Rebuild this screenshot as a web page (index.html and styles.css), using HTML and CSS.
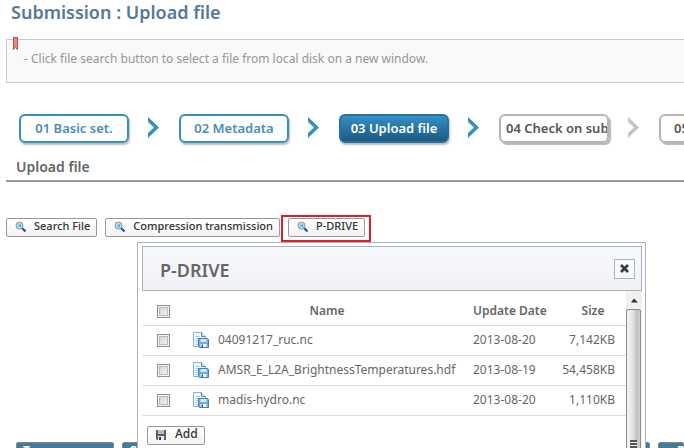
FILE: index.html
```html
<!DOCTYPE html>
<html lang="en">
<head>
<meta charset="utf-8">
<title>Submission : Upload file</title>
<link rel="stylesheet" href="styles.css">
</head>
<body>
<svg class="defs" aria-hidden="true">
  <defs>
    <symbol id="lens" viewBox="0 0 12 12">
      <path d="M7 7l3.500 3.500" stroke="#24588f" stroke-width="2.200"/>
      <circle cx="4.500" cy="4.500" r="3.500" fill="#a5def5" stroke="#8b939d"/>
      <path d="M3 5l3-2v3z" fill="#42a4dc"/>
    </symbol>
    <symbol id="file" viewBox="0 0 16 16">
      <path d="M.5.5h8l4 4v10H.5z" fill="#f2f8fd" stroke="#7fb2dc"/>
      <path d="M8.500.5v4h4" fill="#cfe3f5" stroke="#4d8fc4"/>
      <path d="M2.500 4.500h4M2.500 6.500h6M2.500 8.500h3M2.500 10.500h2M2.500 12.500h2" stroke="#a5cbe8"/>
      <path d="M5.500 6.500h9l1 1v8h-9l-1-1z" fill="#6fabe0" stroke="#3f7fbd"/>
      <path d="M7.500 7h6v3h-6z" fill="#d8ebfa"/>
      <path d="M7.500 12h6v3h-6z" fill="#fff"/>
      <path d="M8.500 12.500h1.500v2.500h-1.500z" fill="#27557f"/>
    </symbol>
    <symbol id="disk" viewBox="0 0 10 10">
      <path d="M0 0h10v10H1L0 9z" fill="#5b6166"/>
      <path d="M2 0h6v4H2z" fill="#b9bec2"/>
      <path d="M2 6h6v4H2z" fill="#e9ebec"/>
      <path d="M3 7h2v3H3z" fill="#33383c"/>
    </symbol>
    <symbol id="chevron" viewBox="0 0 11 21">
      <path d="M0 0l11 10.500L0 21v-5l6-5.500L0 5z" fill="currentColor"/>
    </symbol>
  </defs>
</svg>
<main class="page">
  <h1 class="title">Submission : Upload file</h1>
  <div class="notice">
    <svg class="ribbon" viewBox="0 0 5 13" aria-hidden="true"><path d="M.5.5h4v12l-2-2-2 2z" fill="#ea8a78" stroke="#b5544a"/></svg>
    <p>- Click file search button to select a file from local disk on a new window.</p>
  </div>
  <ol class="steps">
    <li><span class="step">01 Basic set.</span><svg class="arrow"><use href="#chevron"/></svg></li>
    <li><span class="step">02 Metadata</span><svg class="arrow"><use href="#chevron"/></svg></li>
    <li><span class="step current" aria-current="step">03 Upload file</span><svg class="arrow"><use href="#chevron"/></svg></li>
    <li class="pending"><span class="step long">04 Check on submission</span><svg class="arrow"><use href="#chevron"/></svg></li>
    <li class="pending"><span class="step last">05</span></li>
  </ol>
  <h2 class="section">Upload file</h2>
  <div class="tools">
    <button class="btn" type="button"><svg class="lens"><use href="#lens"/></svg>Search File</button>
    <button class="btn" type="button"><svg class="lens"><use href="#lens"/></svg>Compression transmission</button>
    <button class="btn marked" type="button"><svg class="lens"><use href="#lens"/></svg>P-DRIVE</button>
  </div>
  <div class="tabs"><span class="tab">T</span><span class="tab wide">C</span><span class="tab end">P</span></div>
</main>
<section class="dialog" role="dialog" aria-labelledby="dialog-title">
  <header class="dialog-head">
    <h2 id="dialog-title">P-DRIVE</h2>
    <button class="close" type="button" aria-label="Close"><svg viewBox="0 0 9 9"><path d="M1 1l7 7M8 1L1 8" stroke="#3b3d40" stroke-width="2.800"/></svg></button>
  </header>
  <div class="dialog-body">
    <div class="content">
      <table class="files">
        <thead>
          <tr><th class="pick"><input type="checkbox" aria-label="Select all"></th><th>Name</th><th class="date">Update Date</th><th class="size">Size</th></tr>
        </thead>
        <tbody>
          <tr><td class="pick"><input type="checkbox" aria-label="04091217_ruc.nc"></td><td><span class="name"><svg class="file"><use href="#file"/></svg>04091217_ruc.nc</span></td><td class="date">2013-08-20</td><td class="size">7,142KB</td></tr>
          <tr><td class="pick"><input type="checkbox" aria-label="AMSR_E_L2A_BrightnessTemperatures.hdf"></td><td><span class="name"><svg class="file"><use href="#file"/></svg>AMSR_E_L2A_BrightnessTemperatures.hdf</span></td><td class="date">2013-08-19</td><td class="size">54,458KB</td></tr>
          <tr><td class="pick"><input type="checkbox" aria-label="madis-hydro.nc"></td><td><span class="name"><svg class="file"><use href="#file"/></svg>madis-hydro.nc</span></td><td class="date">2013-08-20</td><td class="size">1,110KB</td></tr>
        </tbody>
      </table>
      <button class="btn add" type="button"><svg class="disk"><use href="#disk"/></svg>Add</button>
    </div>
    <div class="scrollbar" aria-hidden="true">
      <svg class="up" viewBox="0 0 16 17"><path d="M5 11l3-4 4 4z" fill="#333"/></svg>
      <div class="thumb"><span class="grip"></span></div>
    </div>
  </div>
</section>
</body>
</html>
```

FILE: styles.css
```css
* { box-sizing: border-box; }

body {
  margin: 0;
  height: 100vh;
  overflow: hidden;
  position: relative;
  background: #fff;
  color: #666;
  font-family: "Noto Sans", "Open Sans", sans-serif;
  font-size: 12px;
  line-height: 16px;
}

h1, h2, p, ol { margin: 0; padding: 0; }
svg { display: block; flex: none; }
button { font: inherit; }

.defs { position: absolute; width: 0; height: 0; }

.page { padding-left: 6px; }

.title {
  padding-left: 5px;
  color: #55799b;
  font-size: 18px;
  font-weight: 600;
  line-height: 24px;
}

.notice {
  position: relative;
  height: 44px;
  margin-top: 15px;
  padding: 11px 17px;
  border: 1px solid #ccc;
  border-right: 0;
  background: #f9f9f9;
  color: #969696;
}

.ribbon {
  position: absolute;
  top: -3px;
  left: 6px;
  width: 5px;
  height: 13px;
}

.steps {
  display: flex;
  height: 31px;
  margin: 31px 0 13px;
  padding-left: 13px;
  list-style: none;
}

.steps li {
  display: flex;
  flex: none;
  gap: 19px;
  width: 160px;
  color: #3390c0;
}

.step {
  width: 110px;
  height: 29px;
  overflow: hidden;
  border: 2px solid #3390c0;
  border-radius: 6px;
  box-shadow: 1px 2px 2px #bbb;
  font-size: 13px;
  font-weight: 600;
  line-height: 25px;
  text-align: center;
  white-space: nowrap;
  color: #4a8cb8;
}

.current {
  border-color: #28719d;
  background: linear-gradient(#3390c6, #1c5982);
  color: #fff;
}

.arrow {
  width: 11px;
  height: 21px;
  margin-top: 3px;
}

.steps .pending { color: #c4c4c4; }

.pending .step {
  border-color: #b5b5b5;
  box-shadow: 2px 2px 1px #b8b8b8;
  color: #555;
}

.long, .last { text-align: left; }
.long { padding-left: 5px; }
.last { padding-left: 13px; }

.section {
  padding: 0 10px 4px;
  border-bottom: 2px solid #999;
  font-size: 14px;
  font-weight: 600;
  line-height: 18px;
}

.tools {
  display: flex;
  gap: 8px;
  margin-top: 36px;
}

.btn {
  display: flex;
  align-items: center;
  height: 19px;
  padding: 0 6px 3px 8px;
  border: 1px solid #999;
  border-radius: 2px;
  background: linear-gradient(#fff, #f3f3f3);
  color: #333;
  font-size: 11px;
  font-weight: 500;
  line-height: 14px;
  white-space: nowrap;
}

.marked { position: relative; }

.marked::after {
  content: "";
  position: absolute;
  inset: -4px -7px -6px -8px;
  border: 2px solid #dc1f2b;
}

.lens {
  width: 12px;
  height: 12px;
  margin: 2px 7px 0 0;
}

.tabs {
  display: flex;
  gap: 8px;
  margin-top: 205px;
  padding-left: 10px;
}

.tab {
  width: 98px;
  height: 24px;
  padding: 0 6px;
  border: 1px solid #888;
  border-radius: 2px;
  background: #457b9a;
  color: #fff;
  font-weight: bold;
}

.wide { flex: 1; }

.end {
  width: 26px;
  padding-left: 18px;
}

.dialog {
  position: absolute;
  top: 242px;
  left: 137px;
  right: 38px;
  bottom: -60px;
  display: flex;
  flex-direction: column;
  padding: 3px;
  padding-left: 4px;
  border: 1px solid #a9b3be;
  background: #fff;
}

.dialog-head {
  display: flex;
  flex: none;
  justify-content: space-between;
  align-items: center;
  height: 45px;
  padding: 0 6px 0 17px;
  border: 1px solid #a9b3be;
  background: linear-gradient(#f8f9fd, #f0f2f7);
}

.dialog-head h2 {
  padding-top: 2px;
  font-size: 18px;
  font-weight: 600;
  line-height: 24px;
}

.close {
  display: grid;
  place-items: center;
  width: 21px;
  height: 20px;
  padding: 0;
  border: 1px solid #a9b3be;
  background: #f8f9fc;
}

.close svg {
  width: 9px;
  height: 9px;
}

.dialog-body {
  display: flex;
  flex: 1;
}

.content { flex: 1; }

.files {
  width: 100%;
  border-collapse: collapse;
  table-layout: fixed;
}

.files tr {
  height: 30px;
  border-bottom: 1px solid #ddd;
}

.files thead tr { height: 34px; }
.files th, .files td { padding: 0; }

.files th {
  padding-top: 7px;
  font-weight: 600;
}

.files .pick { width: 43px; }

.files .date {
  width: 91px;
  padding-left: 4px;
  text-align: left;
}

.files .size { width: 66px; }

.files td.size {
  padding-right: 11px;
  text-align: right;
}

.files input {
  appearance: none;
  display: block;
  width: 13px;
  height: 13px;
  margin: 0 0 0 15px;
  border: 1px solid #8e8f8f;
  background: linear-gradient(135deg, #cdd0d5, #f6f6f6);
  box-shadow: inset 0 0 0 1px #f4f4f4, inset 0 0 0 2px #b9bcc0;
}

.name {
  display: flex;
  align-items: center;
  gap: 9px;
  padding-left: 8px;
}

.file {
  width: 16px;
  height: 16px;
}

.add {
  margin: 10px 0 0 5px;
  font-size: 12px;
}

.disk {
  width: 10px;
  height: 10px;
  margin: 2px 9px 0 0;
}

.scrollbar {
  display: flex;
  flex-direction: column;
  width: 16px;
  background: #f0f0f0;
}

.up {
  width: 16px;
  height: 18px;
}

.thumb {
  flex: 1;
  margin-right: 1px;
  padding: 130px 3px 0;
  border: 1px solid #8d8d8d;
  border-radius: 2px;
  background: linear-gradient(90deg, #f5f5f5, #e3e3e5 45%, #bfc0c4 75%, #d0d0d3);
}

.grip {
  display: block;
  width: 7px;
  height: 12px;
  background: repeating-linear-gradient(#555 0 2px, #eee 2px 3px);
}
```
